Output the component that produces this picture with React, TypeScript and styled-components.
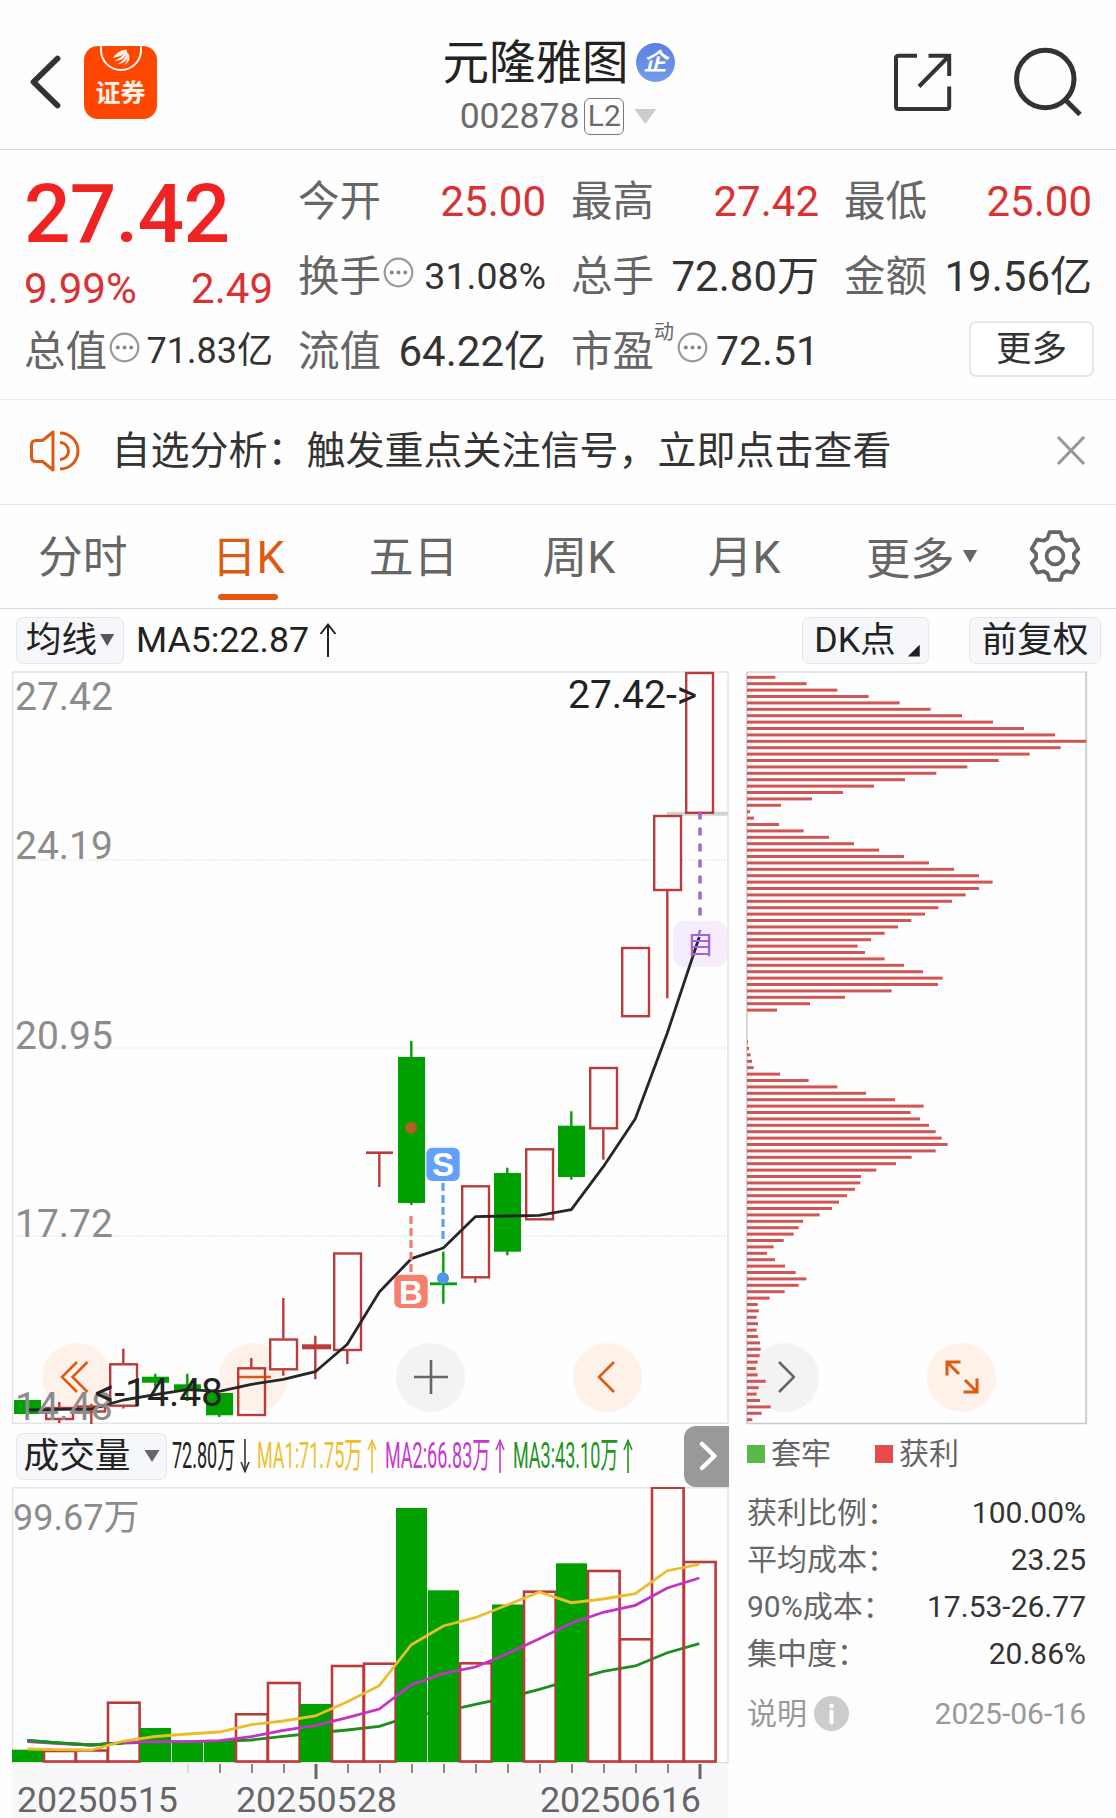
import React from "react";
import styled, { createGlobalStyle } from "styled-components";

const RED = "#bb3a3a";
const GREEN = "#00a000";
const ORANGE = "#dd5a12";

const GlobalStyle = createGlobalStyle`
  body {
    margin: 0;
    background: #fefefe;
  }
  * { box-sizing: border-box; }
  svg { display: block; flex: none; }
`;

const Page = styled.div`
  width: 1116px;
  height: 1818px;
  overflow: hidden;
  background: #fefefe;
  color: #333;
  font-family: Roboto, "Noto Sans CJK SC", sans-serif;
  white-space: nowrap;
`;

/* ---------- header ---------- */

const Header = styled.header`
  display: flex;
  justify-content: space-between;
  height: 150px;
  padding: 0 36px 0 28px;
  border-bottom: 1px solid #d6d6d8;
`;

const HeaderSide = styled.div<{ $gap: number; $top: number }>`
  display: flex;
  align-items: flex-start;
  gap: ${(p) => p.$gap}px;
  width: 188px;
  padding-top: ${(p) => p.$top}px;
`;

const AppLogo = styled.div`
  display: flex;
  flex-direction: column;
  align-items: center;
  width: 73px;
  height: 73px;
  margin-top: -7px;
  border-radius: 14px;
  background: #ff4700;
  color: #fff3ec;
  font-size: 25px;
  font-weight: 700;
  line-height: 39px;
`;

const TitleBlock = styled.div`
  display: flex;
  flex-direction: column;
  align-items: center;
  padding: 34px 0 0 9px;
`;

const TitleLine = styled.div`
  display: flex;
  align-items: center;
  gap: 7px;
  height: 58px;
  color: #222;
  font-size: 46.5px;
  line-height: 58px;
`;

const EnterpriseBadge = styled.span`
  width: 39px;
  height: 39px;
  margin-bottom: 2px;
  border-radius: 50%;
  background: linear-gradient(#5a80e2, #749bec);
  color: #fff;
  font-size: 24px;
  font-weight: 700;
  font-style: italic;
  line-height: 38px;
  text-align: center;
`;

const CodeLine = styled.div`
  display: flex;
  align-items: center;
  gap: 5px;
  height: 49px;
  padding-right: 1px;
  color: #6b6b6b;
  font-size: 35.5px;
  line-height: 49px;
`;

const LevelBadge = styled.span`
  width: 40px;
  height: 37px;
  border: 1.5px solid #777;
  border-radius: 6px;
  font-size: 30px;
  line-height: 34px;
  text-align: center;
`;

const Caret = styled.i<{ $w: number; $h: number; $color: string; $left?: number }>`
  flex: none;
  width: ${(p) => p.$w}px;
  height: ${(p) => p.$h}px;
  margin-left: ${(p) => p.$left ?? 0}px;
  background: ${(p) => p.$color};
  clip-path: polygon(0 0, 100% 0, 50% 100%);
`;

/* ---------- quote ---------- */

const Quote = styled.section`
  display: grid;
  grid-template-columns: 249px repeat(3, 248px);
  column-gap: 25px;
  height: 250px;
  padding: 14px 0 0 24px;
  border-bottom: 1px solid #ececee;
`;

const QuoteColumn = styled.div`
  display: flex;
  flex-direction: column;
`;

const Price = styled.div`
  height: 100px;
  color: #f02323;
  font-size: 82px;
  font-weight: 500;
  letter-spacing: -0.8px;
  line-height: 100px;
`;

const Change = styled.div`
  display: flex;
  justify-content: space-between;
  height: 50px;
  color: #d93232;
  font-size: 42px;
  line-height: 49px;
`;

const Stat = styled.div`
  display: flex;
  align-items: center;
  height: 75px;
  color: #666;
  font-size: 41.5px;
  line-height: 75px;
`;

const StatValue = styled.span<{ $size?: number; $up?: boolean }>`
  margin-left: auto;
  color: ${(p) => (p.$up ? "#d93232" : "#333")};
  font-size: ${(p) => p.$size ?? 42}px;
`;

const DynamicMark = styled.sup`
  align-self: flex-start;
  width: 21px;
  font-size: 20px;
  line-height: 37px;
`;

const MoreButton = styled.button`
  align-self: flex-end;
  width: 125px;
  height: 56px;
  margin: 7px -2px 0 0;
  padding: 0;
  border: 2px solid #e6e7ec;
  border-radius: 7px;
  background: #fff;
  color: #333;
  font: 35.5px/51px Roboto, "Noto Sans CJK SC", sans-serif;
`;

/* ---------- notice ---------- */

const Notice = styled.section`
  display: flex;
  align-items: center;
  height: 105px;
  padding: 0 30px 3px 28px;
  border-bottom: 1px solid #dfe3e4;
  font-size: 39px;
  line-height: 60px;
`;

const NoticeText = styled.span`
  flex: 1;
  margin-left: 29.5px;
`;

/* ---------- tabs ---------- */

const Tabs = styled.nav`
  display: flex;
  height: 104px;
  border-bottom: 1px solid #dcdfe2;
`;

const Tab = styled.div<{ $active?: boolean }>`
  display: flex;
  flex-direction: column;
  align-items: center;
  width: 165.4px;
  padding-top: 22px;
  color: ${(p) => (p.$active ? ORANGE : "#666")};
  font-size: 44.8px;
  line-height: 62px;

  &::after {
    content: "";
    width: 60px;
    height: 6px;
    margin-top: 5px;
    border-radius: 3px;
    background: ${(p) => (p.$active ? "#e2580c" : "transparent")};
  }
`;

const MoreTab = styled.div`
  display: flex;
  align-items: center;
  width: 190px;
  height: 62px;
  margin: 20px 0 0 39px;
  gap: 8px;
  color: #666;
  font-size: 44.3px;
`;

const SettingsButton = styled.div`
  display: flex;
  align-items: flex-start;
  margin-left: -28px;
  padding-top: 24px;
`;

/* ---------- chart area ---------- */

const IndicatorBar = styled.div`
  display: flex;
  align-items: center;
  height: 62px;
  padding: 0 15px 0 16px;
  color: #222;
  font-size: 35.7px;
  line-height: 44px;
`;

const Chip = styled.span<{ $w: number; $left?: string }>`
  display: flex;
  flex: none;
  align-items: center;
  justify-content: center;
  width: ${(p) => p.$w}px;
  height: 47px;
  margin-left: ${(p) => p.$left ?? "0"};
  border: 1.5px solid #e3e6ec;
  border-radius: 7px;
  background: #f6f7fa;
  color: #222;
  font-size: 35.7px;
  line-height: 44px;
`;

const ChipCorner = styled.i`
  align-self: flex-end;
  width: 12px;
  height: 12px;
  margin: 0 -3px 6px 12px;
  background: #222;
  clip-path: polygon(100% 0, 100% 100%, 0 100%);
`;

const ChipGap = styled.span`
  margin: 0 10px 0 12px;
`;

const ChartArea = styled.main`
  position: relative;
  display: flex;
  gap: 17px;
  padding-left: 12px;
`;

const ChartColumn = styled.div<{ $w: number }>`
  position: relative;
  z-index: 1;
  width: ${(p) => p.$w}px;
`;

const FloatingTools = styled.div`
  position: absolute;
  top: 671.8px;
  left: 42px;
  display: flex;
  gap: 108px;
`;

const ToolButton = styled.span<{ $muted?: boolean }>`
  display: flex;
  align-items: center;
  justify-content: center;
  width: 69px;
  height: 69px;
  border-radius: 50%;
  background: ${(p) => (p.$muted ? "#f3f3f3" : "#fef1ea")};
`;

const VolumeBar = styled.div`
  display: flex;
  align-items: center;
  height: 62px;
  padding-left: 4px;
`;

const Narrow = styled.span<{ $w: number; $color: string; $left: number }>`
  width: ${(p) => p.$w}px;
  flex: none;
  margin-left: ${(p) => p.$left}px;
  color: ${(p) => p.$color};
  font-size: 36px;
  line-height: 44px;

  & > b {
    display: inline-block;
    font-weight: 400;
    transform: scaleX(0.5);
    transform-origin: left;
  }
`;

const NextButton = styled.span`
  display: flex;
  align-items: center;
  justify-content: center;
  width: 45px;
  height: 61px;
  margin-left: auto;
  padding-left: 4px;
  border-radius: 12px 0 0 12px;
  background: #999;
`;

const DateAxis = styled.div`
  background: #f8f8fb;
  width: 716px;
`;

/* ---------- cost panel ---------- */

const Legend = styled.div`
  display: flex;
  gap: 44px;
  height: 64px;
  padding-left: 1px;
  color: #666;
  font-size: 30px;
  line-height: 58px;
`;

const LegendItem = styled.span<{ $color: string }>`
  display: flex;
  align-items: center;
  height: 58px;
  gap: 6px;

  &::before {
    content: "";
    width: 18px;
    height: 18px;
    background: ${(p) => p.$color};
  }
`;

const CostRow = styled.div<{ $muted?: boolean }>`
  display: flex;
  align-items: center;
  justify-content: space-between;
  width: 340px;
  height: 47px;
  margin-top: ${(p) => (p.$muted ? 13 : 0)}px;
  padding-left: 1px;
  color: ${(p) => (p.$muted ? "#999" : "#666")};
  font-size: 30px;
  line-height: 47px;
`;

const CostValue = styled.span<{ $muted?: boolean }>`
  color: ${(p) => (p.$muted ? "#999" : "#333")};
`;

const WithIcon = styled.span`
  display: flex;
  align-items: center;
  gap: 7px;
`;

/* ---------- icons ---------- */

const DotsIcon = styled.svg`
  margin: 0 0 8px 2px;
`;

const Dots = () => (
  <DotsIcon width="31" height="31" viewBox="0 0 31 31">
    <circle cx="15.5" cy="15.5" r="13.8" fill="none" stroke="#999" strokeWidth="2.2" />
    {[8.8, 15.5, 22.2].map((x) => (
      <circle key={x} cx={x} cy="15.5" r="2" fill="#888" />
    ))}
  </DotsIcon>
);

const Arrow = ({ color = "#222" }: { color?: string }) => (
  <svg width="18" height="36" viewBox="0 0 18 36" fill="none" stroke={color} strokeWidth="2">
    <path d="M9 2V35" />
    <path d="M1.5 12L9 2.5L16.5 12" />
  </svg>
);

const SlimArrow = ({ color, down = false }: { color: string; down?: boolean }) => (
  <svg width="10" height="36" viewBox="0 0 10 36">
    <g transform={down ? "rotate(180 5 18)" : undefined} fill="none" stroke={color} strokeWidth="1.6">
      <path d="M5 2V35" />
      <path d="M1 12L5 2.5L9 12" />
    </g>
  </svg>
);

const Gear = () => {
  const pts: string[] = [];
  for (let k = 0; k < 6; k++) {
    const a = (k * Math.PI) / 3;
    [[-7.5, -17.5], [-5.5, -23.8], [5.5, -23.8], [7.5, -17.5]].forEach(([x, y]) => {
      pts.push(`${27 + x * Math.cos(a) - y * Math.sin(a)},${27 + x * Math.sin(a) + y * Math.cos(a)}`);
    });
  }
  return (
    <svg width="54" height="54" viewBox="0 0 54 54" fill="none" stroke="#666" strokeWidth="3.8">
      <polygon points={pts.join(" ")} strokeLinejoin="round" />
      <circle cx="27" cy="27" r="8.4" />
    </svg>
  );
};

/* ---------- chart data, in page pixels ---------- */

type Candle = { k: "up" | "down" | "flat"; o: number; c: number; h: number; l: number };

const cd = (k: Candle["k"], o: number, c: number, h = o, l = c): Candle => ({ k, o, c, h, l });

const CANDLES: Candle[] = [
  cd("down", 1400, 1414),
  cd("up", 1407, 1420, 1402, 1423),
  cd("up", 1405.5, 1412.5, 1404, 1424),
  cd("up", 1363.3, 1406.7, 1348.7, 1408.5),
  cd("down", 1376.7, 1382.7, 1373.7, 1388),
  cd("down", 1384.3, 1390.7, 1373.7, 1401),
  cd("down", 1393, 1415.3, 1393, 1417),
  cd("up", 1367.3, 1416, 1358, 1416),
  cd("up", 1338.5, 1370.3, 1298, 1375.7),
  cd("flat", 1344.3, 1349.3, 1335.7, 1379.3),
  cd("up", 1252.5, 1351, 1252.5, 1364),
  cd("flat", 1151.4, 1154, 1152, 1187),
  cd("down", 1057, 1203, 1041, 1205),
  cd("down", 1282.4, 1285.2, 1251.7, 1303.7),
  cd("up", 1185.3, 1278.3, 1185.3, 1282.7),
  cd("down", 1173, 1251.7, 1167.7, 1255.3),
  cd("up", 1148.3, 1220.3),
  cd("down", 1125.7, 1177, 1111.3, 1179.7),
  cd("up", 1067, 1129.3, 1067, 1159.7),
  cd("up", 947, 1017.2),
  cd("up", 815, 891, 815, 998.3),
  cd("up", 672, 813.8),
];

const MA5 = [
  1410, 1409.3, 1409, 1400, 1394.7, 1389.7, 1391.3, 1384.3, 1379.3, 1371.7, 1344.3, 1292, 1258.7, 1248,
  1216.7, 1216, 1215.3, 1209.7, 1166.7, 1118.7, 1033, 937,
];

const VOLUMES: [boolean, number][] = [
  [false, 1749.7], [true, 1751], [true, 1750.5], [true, 1702.7], [false, 1728], [false, 1742.7],
  [false, 1741.7], [true, 1714.3], [true, 1683], [false, 1704], [true, 1666], [true, 1663.7],
  [false, 1508], [false, 1590.3], [true, 1663.3], [false, 1604.5], [true, 1591.7], [false, 1563.3],
  [true, 1571], [true, 1639.3], [true, 1487.7], [true, 1562],
];

const VMA1 = [
  1749, 1749.7, 1750, 1741, 1736.5, 1734, 1732, 1724.7, 1721, 1716, 1701.7, 1685.7, 1644.7, 1626, 1617.7,
  1605, 1592, 1602.7, 1599, 1593.7, 1570.7, 1564.3,
];
const VMA2 = [
  1741.7, 1743.5, 1745, 1742.7, 1741.7, 1741.7, 1740.7, 1736.7, 1730.3, 1725.7, 1717.7, 1709, 1684.7,
  1673.7, 1667, 1653.7, 1638.7, 1623.3, 1612.3, 1605.3, 1588, 1578,
];
const VMA3 = [
  1740.3, 1743, 1745, 1743, 1742, 1741.7, 1741.3, 1740, 1736.3, 1733, 1730, 1726.3, 1716, 1711.5, 1704.3,
  1697.7, 1689.3, 1680, 1671.3, 1666, 1652.7, 1643.7,
];

const COSTS = [
  85, 179, 271, 365, 458, 551, 645, 738, 831, 924, 1017, 941, 848, 755, 661, 568, 474, 381, 288, 195, 102,
  9, 21, 96, 170, 246, 321, 396, 471, 546, 621, 696, 737, 696, 656, 615, 574, 534, 493, 453, 413, 372, 332,
  354, 413, 471, 528, 587, 573, 434, 294, 189, 90, 0, 0, 0, 0, 3, 6, 11, 15, 20, 99, 185, 271, 357, 444,
  530, 491, 519, 546, 566, 584, 602, 566, 494, 447, 388, 342, 340, 324, 300, 276, 255, 218, 168, 155, 140,
  110, 80, 60, 84, 114, 146, 178, 155, 113, 68, 32, 35, 29, 33, 29, 33, 39, 41, 38, 32, 27, 32, 56, 35, 29,
  39, 71, 44, 16,
].map((v) => v / 3);

const xAt = (i: number) => 27.3 + 32 * i;
const line = (ys: number[]) => ys.map((y, i) => `${xAt(i)},${y}`).join(" ");

const CHART_FONT = 'Roboto, "Noto Sans CJK SC", sans-serif';

const Axis = styled.text<{ $size?: number; $color?: string }>`
  fill: ${(p) => p.$color ?? "#8c8c8c"};
  font-family: ${CHART_FONT};
  font-size: ${(p) => p.$size ?? 39}px;
`;

const MarkerText = styled.text`
  fill: #fff;
  font-family: "Liberation Sans", Arial, sans-serif;
  font-size: 33px;
  font-weight: 700;
  text-anchor: middle;
`;

const CandleShape = ({ d, i }: { d: Candle; i: number }) => {
  const x = xAt(i);
  if (d.k === "up") {
    return (
      <g stroke={RED} strokeWidth="2.4">
        {d.h < d.o && <path d={`M${x} ${d.h}V${d.o}`} />}
        {d.l > d.c && <path d={`M${x} ${d.c}V${d.l}`} />}
        <rect
          x={x - 13.1}
          y={d.o + 1}
          width="26.8"
          height={d.c - d.o - 2}
          fill={i === 7 ? "none" : "#fefefe"}
        />
      </g>
    );
  }
  const color = d.k === "down" ? GREEN : RED;
  return (
    <g>
      <path d={`M${x} ${d.h}V${d.l}`} stroke={color} strokeWidth="2.4" />
      <rect x={x - 13.3} y={d.o} width={i === 9 ? 29 : 27} height={d.c - d.o} fill={color} />
    </g>
  );
};

const KLineChart = () => (
  <svg width="717" height="754" viewBox="12 671 717 754">
    <path d="M12.5 672H728V1423.3H12.5Z" fill="none" stroke="#e3e3e3" strokeWidth="1.5" />
    {[860, 1048, 1236].map((y) => (
      <path key={y} d={`M13 ${y}H728`} stroke="#dedede" strokeWidth="1" strokeDasharray="1.5 1.5" />
    ))}
    <path d="M667 813.8H728" stroke="#d2d3d8" strokeWidth="4" />
    {CANDLES.map((d, i) => (
      <CandleShape key={i} d={d} i={i} />
    ))}
    <rect x="673" y="920.7" width="54" height="46.3" rx="11" fill="#f5ecfd" />
    <polyline points={line(MA5)} fill="none" stroke="#262626" strokeWidth="2.8" strokeLinejoin="round" />
    <path d="M700 811.5V916" stroke="#a162dc" strokeWidth="3.4" strokeDasharray="8 8" />
    <Axis x="700.3" y="954" $size={28} $color="#a162dc" textAnchor="middle">
      自
    </Axis>
    <circle cx="411" cy="1127.7" r="6" fill="#b0601f" />
    <path d="M411 1216V1273" stroke="#f07f72" strokeWidth="3.2" strokeDasharray="8 4" />
    <rect x="394.3" y="1274.7" width="33.4" height="33.4" rx="6" fill="#f67f70" />
    <MarkerText x="411" y="1303.5">B</MarkerText>
    <path d="M443 1183V1240" stroke="#5e9ff2" strokeWidth="3.2" strokeDasharray="8 4" />
    <rect x="426.3" y="1147.7" width="33.4" height="33.4" rx="6" fill="#62a0fa" />
    <MarkerText x="443" y="1176.3">S</MarkerText>
    <circle cx="443" cy="1278.3" r="6" fill="#4f97ea" />
    <Axis x="15" y="709.5">27.42</Axis>
    <Axis x="15" y="859">24.19</Axis>
    <Axis x="15" y="1048.5">20.95</Axis>
    <Axis x="15" y="1236.5">17.72</Axis>
    <Axis x="15" y="1420">14.48</Axis>
    <Axis x="568" y="707.7" $color="#222">{"27.42->"}</Axis>
    <Axis x="223" y="1406" $color="#222" textAnchor="end">{"<-14.48"}</Axis>
  </svg>
);

const VolumeChart = () => (
  <svg width="717" height="277" viewBox="12 1487 717 277">
    <path d="M12.5 1487.7H728V1762.7H12.5Z" fill="none" stroke="#e3e3e3" strokeWidth="1.5" />
    <polyline points={line(VMA3)} fill="none" stroke="#1b8f1e" strokeWidth="2.8" />
    {VOLUMES.map(([up, y], i) =>
      up ? (
        <rect
          key={i}
          x={12 + 32 * i}
          y={y}
          width="31.6"
          height={1761.5 - y}
          fill="none"
          stroke={RED}
          strokeWidth="2.6"
        />
      ) : (
        <rect key={i} x={12 + 32 * i} y={y} width="31" height={1762 - y} fill={GREEN} />
      )
    )}
    <polyline points={line(VMA2)} fill="none" stroke="#c233c6" strokeWidth="2.8" />
    <polyline points={line(VMA3.slice(0, 4))} fill="none" stroke="#1b8f1e" strokeWidth="2.8" />
    <polyline points={line(VMA1)} fill="none" stroke="#ebbd2c" strokeWidth="2.8" />
    <Axis x="13" y="1530" $size={36}>
      99.67万
    </Axis>
  </svg>
);

const DateTicks = () => (
  <svg width="716" height="54" viewBox="12 1764 716 54">
    {Array.from({ length: 17 }, (_, k) => {
      const major = k === 4 || k === 16;
      return (
        <path
          key={k}
          d={`M${188 + 32 * k} 1764V${major ? 1779 : 1773}`}
          stroke={k === 0 ? "#ddd" : major ? "#666" : "#888"}
          strokeWidth={major ? 3 : 2}
        />
      );
    })}
    <Axis x="17" y="1811.5" $size={35.8} $color="#666">20250515</Axis>
    <Axis x="236" y="1811.5" $size={35.8} $color="#666">20250528</Axis>
    <Axis x="540" y="1811.5" $size={35.8} $color="#666">20250616</Axis>
  </svg>
);

const CostChart = () => (
  <svg width="342" height="754" viewBox="746 671 342 754">
    <path d="M747 672H1086" stroke="#d9d9d9" strokeWidth="1.5" />
    <path d="M747 672V1423.5H1086.2" fill="none" stroke="#cacaca" strokeWidth="1.5" />
    <path d="M1086.2 671.5V1424" stroke="#c8c8c8" strokeWidth="1.8" />
    {COSTS.map((w, n) => (
      <rect key={n} x="747" y={675.8 + 6.4 * n} width={w} height="3" fill="#d05656" />
    ))}
  </svg>
);

const App = () => (
  <Page>
    <GlobalStyle />
    <Header>
      <HeaderSide $gap={21} $top={53}>
        <svg width="35" height="58" viewBox="0 0 35 58">
          <path d="M29.5 5.5L5.5 29L29.5 52.5" fill="none" stroke="#333" strokeWidth="5.8" strokeLinecap="round" strokeLinejoin="round" />
        </svg>
        <AppLogo>
          <svg width="44" height="28" viewBox="0 0 44 28">
            <path d="M2 0V4A20 20 0 0 0 42 4V0" fill="none" stroke="#fff" strokeWidth="2" />
            <path
              d="M14 12C18 6 24 3 28 4C27 8 23 10 14 12ZM15 15C20 13 26 8 28 5C29 10 23 15 15 15ZM19 18C24 15 28 10 28.5 6C31 11 27 17 19 18ZM25 19C28 16 29.5 11 29 7C32 12 30 17 25 19Z"
              fill="#fff3ec"
            />
          </svg>
          证券
        </AppLogo>
      </HeaderSide>
      <TitleBlock>
        <TitleLine>
          元隆雅图<EnterpriseBadge>企</EnterpriseBadge>
        </TitleLine>
        <CodeLine>
          002878<LevelBadge>L2</LevelBadge>
          <Caret $w={22} $h={15} $color="#ccc" $left={5} />
        </CodeLine>
      </TitleBlock>
      <HeaderSide $gap={57} $top={44}>
        <svg width="62" height="72" viewBox="892 44 62 72" fill="none" stroke="#333" strokeWidth="4">
          <path d="M917 55.8H898.5Q896 55.8 896 58.3V106.5Q896 109 898.5 109H946.5Q949.2 109 949.2 106.5V86.5" />
          <path d="M928.5 55.8H949.2V76M949 56L919 86.5" />
        </svg>
        <svg width="72" height="76" viewBox="1011 44 72 76" fill="none" stroke="#333" strokeWidth="5">
          <circle cx="1045.3" cy="79" r="28.7" />
          <path d="M1065 99.5L1080 114.5" />
        </svg>
      </HeaderSide>
    </Header>

    <Quote>
      <QuoteColumn>
        <Price>27.42</Price>
        <Change>
          <span>9.99%</span>
          <span>2.49</span>
        </Change>
        <Stat>
          总值<Dots />
          <StatValue $size={36}>71.83亿</StatValue>
        </Stat>
      </QuoteColumn>
      <QuoteColumn>
        <Stat>今开<StatValue $up>25.00</StatValue></Stat>
        <Stat>
          换手<Dots />
          <StatValue $size={37.5}>31.08%</StatValue>
        </Stat>
        <Stat>流值<StatValue>64.22亿</StatValue></Stat>
      </QuoteColumn>
      <QuoteColumn>
        <Stat>最高<StatValue $up>27.42</StatValue></Stat>
        <Stat>总手<StatValue>72.80万</StatValue></Stat>
        <Stat>
          市盈<DynamicMark>动</DynamicMark>
          <Dots />
          <StatValue $size={41}>72.51</StatValue>
        </Stat>
      </QuoteColumn>
      <QuoteColumn>
        <Stat>最低<StatValue $up>25.00</StatValue></Stat>
        <Stat>金额<StatValue>19.56亿</StatValue></Stat>
        <MoreButton>更多</MoreButton>
      </QuoteColumn>
    </Quote>

    <Notice>
      <svg width="54" height="46" viewBox="28 428 54 46" fill="none" stroke={ORANGE} strokeWidth="3">
        <path d="M53 432V470L42.5 461.5H36Q31.5 461.5 31.5 457V445Q31.5 440.5 36 440.5H42.5Z" strokeLinejoin="round" />
        <path d="M60 442.5A8.5 8.5 0 0 1 60 459.5M60 433A18 18 0 0 1 60 469" />
      </svg>
      <NoticeText>自选分析：触发重点关注信号，立即点击查看</NoticeText>
      <svg width="30" height="31" viewBox="0 0 30 31">
        <path d="M2 2L28 29M28 2L2 29" stroke="#999" strokeWidth="3.2" />
      </svg>
    </Notice>

    <Tabs>
      <Tab>分时</Tab>
      <Tab $active>日K</Tab>
      <Tab>五日</Tab>
      <Tab>周K</Tab>
      <Tab>月K</Tab>
      <MoreTab>
        更多<Caret $w={15} $h={13} $color="#666" />
      </MoreTab>
      <SettingsButton>
        <Gear />
      </SettingsButton>
    </Tabs>

    <IndicatorBar>
      <Chip $w={108}>
        均线<Caret $w={14} $h={12} $color="#555" $left={3} />
      </Chip>
      <ChipGap>MA5:22.87</ChipGap>
      <Arrow />
      <Chip $w={127} $left="auto">
        DK点<ChipCorner />
      </Chip>
      <Chip $w={132} $left="40px">前复权</Chip>
    </IndicatorBar>

    <ChartArea>
      <FloatingTools>
        <ToolButton>
          <svg width="34" height="36" viewBox="0 0 34 36" fill="none" stroke={ORANGE} strokeWidth="2.5">
            <path d="M17 3L2 18L17 33M27.5 3L12.5 18L27.5 33" />
          </svg>
        </ToolButton>
        <ToolButton>
          <svg width="34" height="4" viewBox="0 0 34 4">
            <path d="M0 2H34" stroke={ORANGE} strokeWidth="2.5" />
          </svg>
        </ToolButton>
        <ToolButton $muted>
          <svg width="34" height="34" viewBox="0 0 34 34">
            <path d="M0 17H34M17 0V34" stroke="#666" strokeWidth="2.6" />
          </svg>
        </ToolButton>
        <ToolButton>
          <svg width="24" height="36" viewBox="0 0 24 36">
            <path d="M18 3L3 18L18 33" fill="none" stroke={ORANGE} strokeWidth="2.6" />
          </svg>
        </ToolButton>
        <ToolButton $muted>
          <svg width="20" height="36" viewBox="0 0 20 36">
            <path d="M4 3L19 18L4 33" fill="none" stroke="#666" strokeWidth="2.6" />
          </svg>
        </ToolButton>
        <ToolButton>
          <svg width="34" height="34" viewBox="0 0 34 34" fill="none" stroke={ORANGE} strokeWidth="3">
            <path d="M2 15.5V2H15.5M2 2L14 14M32 18.5V32H18.5M32 32L20 20" />
          </svg>
        </ToolButton>
      </FloatingTools>

      <ChartColumn $w={717}>
        <KLineChart />
        <VolumeBar>
          <Chip $w={151}>
            成交量<Caret $w={15} $h={12} $color="#666" $left={14} />
          </Chip>
          <Narrow $w={67.5} $color="#222" $left={5}><b>72.80万</b></Narrow>
          <SlimArrow color="#333" down />
          <Narrow $w={110} $color="#ebc02e" $left={7}><b>MA1:71.75万</b></Narrow>
          <SlimArrow color="#ebc02e" />
          <Narrow $w={110} $color="#c63acb" $left={8}><b>MA2:66.83万</b></Narrow>
          <SlimArrow color="#c63acb" />
          <Narrow $w={110} $color="#1f951f" $left={8}><b>MA3:43.10万</b></Narrow>
          <SlimArrow color="#1f951f" />
          <NextButton>
            <svg width="20" height="32" viewBox="0 0 20 32">
              <path d="M3 4L15.5 16L3 28" fill="none" stroke="#fff" strokeWidth="4.5" strokeLinecap="round" strokeLinejoin="round" />
            </svg>
          </NextButton>
        </VolumeBar>
        <VolumeChart />
        <DateAxis>
          <DateTicks />
        </DateAxis>
      </ChartColumn>

      <ChartColumn $w={342}>
        <CostChart />
        <Legend>
          <LegendItem $color="#5ab946">套牢</LegendItem>
          <LegendItem $color="#e84b4b">获利</LegendItem>
        </Legend>
        <CostRow>获利比例：<CostValue>100.00%</CostValue></CostRow>
        <CostRow>平均成本：<CostValue>23.25</CostValue></CostRow>
        <CostRow>90%成本：<CostValue>17.53-26.77</CostValue></CostRow>
        <CostRow>集中度：<CostValue>20.86%</CostValue></CostRow>
        <CostRow $muted>
          <WithIcon>
            说明
            <svg width="35" height="35" viewBox="0 0 35 35">
              <circle cx="17.5" cy="17.5" r="17.5" fill="#ccc" />
              <circle cx="17.5" cy="10" r="2.3" fill="#fff" />
              <path d="M17.5 15.5V26.5" stroke="#fff" strokeWidth="4" strokeLinecap="round" />
            </svg>
          </WithIcon>
          <CostValue $muted>2025-06-16</CostValue>
        </CostRow>
      </ChartColumn>
    </ChartArea>
  </Page>
);

export default App;
